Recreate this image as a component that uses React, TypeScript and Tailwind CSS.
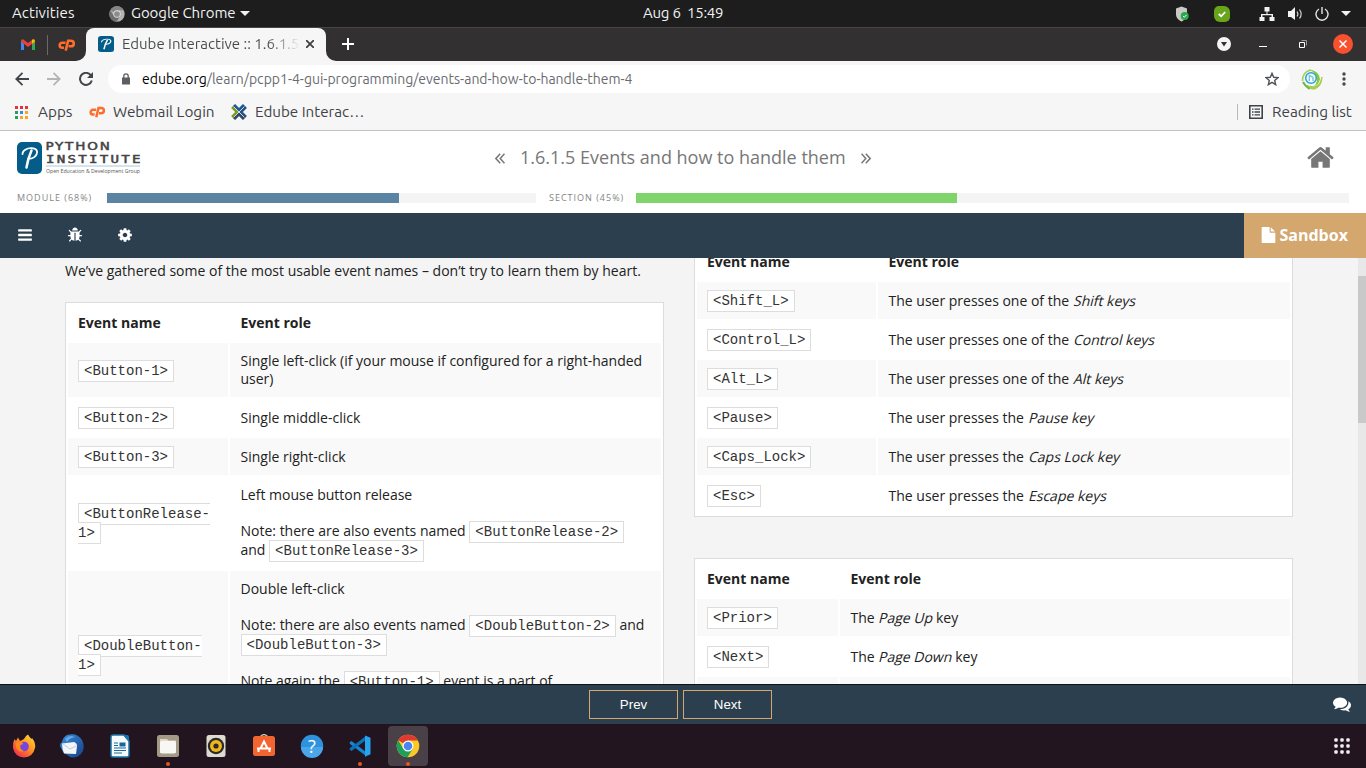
import React from "react";

type Kids = { children?: React.ReactNode };

const HOME =
  "M1472 992v480q0 26-19 45t-45 19h-384v-384h-256v384h-384q-26 0-45-19t-19-45v-480q0-1 .5-3t.5-3l575-474 575 474q1 2 1 6zm223-69l-62 74q-8 9-21 11h-3q-13 0-21-7l-692-577-692 577q-12 8-24 7-13-2-21-11l-62-74q-8-10-7-23.5t11-21.5l719-599q32-26 76-26t76 26l244 204v-195q0-14 9-23t23-9h192q14 0 23 9t9 23v408l219 182q10 8 11 21.5t-7 23.5z";
const COG =
  "M1152 896q0-106-75-181t-181-75-181 75-75 181 75 181 181 75 181-75 75-181zm512-109v222q0 12-8 23t-20 13l-185 28q-19 54-39 91 35 50 107 138 10 12 10 25t-9 23q-27 37-99 108t-94 71q-12 0-26-9l-138-108q-44 23-91 38-16 136-29 186-7 28-36 28h-222q-14 0-24.5-8.5t-11.5-21.5l-28-184q-49-16-90-37l-141 107q-10 9-25 9-14 0-25-11-126-114-165-168-7-10-7-23 0-12 8-23 15-21 51-66.5t54-70.5q-27-50-41-99l-183-27q-13-2-21-12.5t-8-23.5v-222q0-12 8-23t19-13l186-28q14-46 39-92-40-57-107-138-10-12-10-24 0-10 9-23 26-36 98.5-107.5t94.5-71.5q13 0 26 10l138 107q44-23 91-38 16-136 29-186 7-28 36-28h222q14 0 24.5 8.5t11.5 21.5l28 184q49 16 90 37l142-107q9-9 24-9 13 0 25 10 129 119 165 170 7 8 7 22 0 12-8 23-15 21-51 66.5t-54 70.5q26 50 41 98l183 28q13 2 21 12.5t8 23.5z";
const BARS =
  "M1664 1344v128q0 26-19 45t-45 19h-1408q-26 0-45-19t-19-45v-128q0-26 19-45t45-19h1408q26 0 45 19t19 45zm0-512v128q0 26-19 45t-45 19h-1408q-26 0-45-19t-19-45v-128q0-26 19-45t45-19h1408q26 0 45 19t19 45zm0-512v128q0 26-19 45t-45 19h-1408q-26 0-45-19t-19-45v-128q0-26 19-45t45-19h1408q26 0 45 19t19 45z";
const BUG =
  "M1696 960q0 26-19 45t-45 19h-224q0 171-67 290l208 209q19 19 19 45t-19 45q-18 19-45 19t-45-19l-198-197q-5 5-15 13t-42 28.5-65 36.5-82 29-97 13v-896h-128v896q-51 0-101.5-13.5t-87-33-66-39-43.5-32.5l-15-14-183 207q-20 21-48 21-24 0-43-16-19-18-20.5-44.5t15.5-46.5l202-227q-58-114-58-274h-224q-26 0-45-19t-19-45 19-45 45-19h224v-294l-173-173q-19-19-19-45t19-45 45-19 45 19l173 173h844l173-173q19-19 45-19t45 19 19 45-19 45l-173 173v294h224q26 0 45 19t19 45zm-480-576h-640q0-133 93.5-226.5t226.5-93.5 226.5 93.5 93.5 226.5z";
const COMMENTS =
  "M1408 768q0 139-94 257t-256.5 186.5-353.5 68.5q-86 0-176-16-124 88-278 128-36 9-86 16h-3q-11 0-20.5-8t-11.5-21q-1-3-1-6.5t.5-6.5 2-6l2.5-5 3.5-5.5 4-5 4.5-5 4-4.5q5-6 23-25t26-29.5 22.5-29 25-38.5 20.5-44q-124-72-195-177t-71-224q0-139 94-257t256.5-186.5 353.5-68.5 353.5 68.5 256.5 186.5 94 257zm384 256q0 120-71 224.5t-195 176.5q10 24 20.5 44t25 38.5 22.5 29 26 29.5 23 25q1 1 4 4.5t4.5 5 4 5 3.5 5.5l2.5 5 2 6 .5 6.5-1 6.5q-3 14-13 22t-22 7q-50-7-86-16-154-40-278-128-90 16-176 16-271 0-472-132 58 4 88 4 161 0 309-45t264-129q125-92 192-212t67-254q0-77-23-152 129 71 204 178t75 230z";
const FILE =
  "M1152 512v-472q22 14 36 28l408 408q14 14 28 36h-472zm-128 32q0 40 28 68t68 28h544v1056q0 40-28 68t-68 28h-1344q-40 0-68-28t-28-68v-1600q0-40 28-68t68-28h800v544z";

function Glyph({ d, className }: { d: string; className: string }) {
  return (
    <svg viewBox="0 0 1792 1792" fill="currentColor" className={className}>
      <path d={d} />
    </svg>
  );
}

function CPanel({ className }: { className: string }) {
  return (
    <svg viewBox="0 0 17 12" className={className} fill="none" stroke="#ff6c2c" strokeWidth="2.6">
      <path d="M7.600 3.700H4.200a2.500 2.500 0 0 0 0 5H6" />
      <path d="M7.700 11.600L10.100 1.700H13a2.800 2.800 0 0 1 0 5.600H10.600" />
    </svg>
  );
}

function PyMark({ className }: { className: string }) {
  return (
    <svg viewBox="0 0 25 32" preserveAspectRatio="none" className={className}>
      <rect width="25" height="32" rx="5" fill="#045c8a" />
      <path
        d="M5.500 12C5.500 8.500 10 6 14.500 6.200 20 6.400 21 9.500 19.500 12.500 18 15.500 14.500 17 11.500 16.500"
        fill="none"
        stroke="#fff"
        strokeWidth="1.800"
        strokeLinecap="round"
      />
      <path d="M14.500 8.500C12.500 13 10.500 19 9.500 25.500" fill="none" stroke="#fff" strokeWidth="2.500" strokeLinecap="round" />
    </svg>
  );
}

function ChromeLogo({ className }: { className: string }) {
  return (
    <svg viewBox="0 0 24 24" className={className}>
      <circle cx="12" cy="12" r="11.500" fill="#b4b4b4" />
      <path d="M12 12L2 6.200A11.500 11.500 0 0 1 22 6.500H12z" fill="#858585" />
      <path d="M2 6.200A11.500 11.500 0 0 0 11.500 23.500L17 14.500 12 12 7.200 14.800z" fill="#6f6f6f" />
      <circle cx="12" cy="12" r="5.500" fill="#e0e0e0" />
      <circle cx="12" cy="12" r="4.300" fill="#8c8c8c" />
    </svg>
  );
}

function TopBar() {
  return (
    <div className="flex h-[27px] items-center bg-[#1d1d1d] pl-3 text-[15px] text-[#f2f2f2]">
      <span className="w-[97px] tracking-[0.1px]">Activities</span>
      <ChromeLogo className="size-4" />
      <span className="ml-1.5 w-[109px] tracking-[-0.05px] whitespace-nowrap">Google Chrome</span>
      <svg viewBox="0 0 10 5" className="h-[5px] w-[10px]" fill="#f2f2f2">
        <path d="M0 0h10L5 5z" />
      </svg>
      <span className="ml-[393px] w-[81px] shrink-0 whitespace-pre tracking-[-0.25px]">Aug 6  15:49</span>
      <div className="flex flex-1 items-center pl-[451px]">
        <svg viewBox="0 0 14 16" className="h-4 w-[14px] shrink-0">
          <path d="M6.500 0.500L12 2.500V8C12 12 9.500 14 6.500 15.500 3.500 14 1 12 1 8V2.500z" fill="#c9c9c9" />
          <circle cx="9.700" cy="10" r="4" fill="#2ba84a" />
          <path d="M8 10l1.300 1.300 2.200-2.400" stroke="#fff" fill="none" />
        </svg>
        <svg viewBox="0 0 16 16" className="ml-[25px] size-4 shrink-0">
          <path d="M5 0h5a6 6 0 0 1 6 6v5a5 5 0 0 1-5 5H6a6 6 0 0 1-6-6V5a5 5 0 0 1 5-5z" fill="#69a51b" />
          <path d="M4.800 8l2.400 2.300 4-4.300" stroke="#fff" strokeWidth="1.800" fill="none" />
        </svg>
        <svg viewBox="0 0 16 14" className="ml-[28.5px] h-[14px] w-4 shrink-0" fill="#f2f2f2">
          <path d="M5.500 0h5v4.500H8.500V7H14v3h1.500v4h-5v-4h2V8.300H3.500V10h2v4h-5v-4H2V7h5.500V4.500h-2z" />
        </svg>
        <svg viewBox="0 0 16 14" className="ml-[13.5px] h-[14px] w-4 shrink-0" fill="#f2f2f2">
          <path d="M0 4h3l4-4v13L3 10H0z" />
          <path d="M9 4.500q1.800 2.500 0 5M11.500 2.500q3.300 4.500 0 9" fill="none" stroke="#d0d0d0" strokeWidth="1.200" />
        </svg>
        <svg viewBox="0 0 14 14" className="ml-[11px] size-[14px] shrink-0" fill="none" stroke="#e6e6e6" strokeWidth="1.400">
          <path d="M4 2A6 6 0 1 0 10 2M7 0v7" />
        </svg>
        <svg viewBox="0 0 10 5" className="ml-[12px] h-[5px] w-[10px] shrink-0" fill="#f2f2f2">
          <path d="M0 0h10L5 5z" />
        </svg>
      </div>
    </div>
  );
}

function TabStrip() {
  return (
    <div className="flex h-[34px] items-center border-t border-[#474445] bg-[#333031]">
      <svg viewBox="0 0 14 11" className="ml-[21px] h-[11px] w-[14px]">
        <path d="M0 1.500V11h3V5z" fill="#4285f4" />
        <path d="M14 1.500V11h-3V5z" fill="#34a853" />
        <path d="M0 2.500Q0 .2 2 .2L7 4 12 .2Q14 .2 14 2.500L7 8z" fill="#ea4335" />
        <path d="M11 1L12 .2Q14 .2 14 2.500L11 5z" fill="#fbbc04" />
      </svg>
      <div className="ml-3 h-5 w-px bg-[#6b696a]" />
      <CPanel className="ml-[10px] h-3 w-[17px]" />
      <svg viewBox="0 0 10 10" className="ml-[1px] size-[10px] self-end" fill="#f6f6f6">
        <path d="M10 0A10 10 0 0 1 0 10H10z" />
      </svg>
      <div className="flex h-full w-[240px] items-center rounded-t-lg bg-[#f6f6f6] pb-px pl-3 text-[15px] text-[#45484b]">
        <PyMark className="size-4 shrink-0" />
        <span className="ml-2 w-[178px] shrink-0 overflow-hidden bg-gradient-to-r from-[#45484b] from-82% to-transparent bg-clip-text whitespace-nowrap text-transparent">
          Edube Interactive :: 1.6.1.5
        </span>
        <svg viewBox="0 0 8 8" className="ml-[6px] size-2 shrink-0" stroke="#3d4043" strokeWidth="1.800">
          <path d="M0 0l8 8M8 0L0 8" />
        </svg>
      </div>
      <svg viewBox="0 0 10 10" className="size-[10px] self-end" fill="#f6f6f6">
        <path d="M0 0A10 10 0 0 0 10 10H0z" />
      </svg>
      <svg viewBox="0 0 12 12" className="-mt-px ml-[6px] size-3" stroke="#fff" strokeWidth="2">
        <path d="M6 0v12M0 6h12" />
      </svg>
      <div className="ml-auto flex items-center pr-[13px] pb-px">
        <svg viewBox="0 0 14 14" className="size-[14px]">
          <circle cx="7" cy="7" r="7" fill="#f6f6f6" />
          <path d="M4 5h6L7 9.500z" fill="#333031" />
        </svg>
        <div className="mt-1 ml-[28px] h-px w-2 bg-white" />
        <svg viewBox="0 0 8 8" className="ml-[32px] size-2" fill="none" stroke="#fff">
          <path d="M.5 2.500h5v5h-5z" />
          <path d="M2.500.5h5v5" stroke="#9a9899" />
        </svg>
        <svg viewBox="0 0 20 20" className="ml-[26px] size-5">
          <circle cx="10" cy="10" r="10" fill="#f9502d" />
          <path d="M6.500 6.500l7 7M13.500 6.500l-7 7" stroke="#fff" strokeWidth="1.500" />
        </svg>
      </div>
    </div>
  );
}

function Toolbar() {
  return (
    <div className="flex h-[36px] items-center bg-[#f6f6f6]">
      <svg viewBox="0 0 14 14" className="ml-[15px] size-[14px]" fill="none" stroke="#414549" strokeWidth="1.800">
        <path d="M14 7H1.500M7.500 .8L1.300 7l6.200 6.200" />
      </svg>
      <svg viewBox="0 0 14 14" className="ml-[18px] size-[14px]" fill="none" stroke="#b3b5b7" strokeWidth="1.800">
        <path d="M0 7h12.500M6.500 .8L12.700 7l-6.200 6.200" />
      </svg>
      <svg viewBox="0 0 14 14" className="ml-[18px] size-[14px]" fill="none" stroke="#414549" strokeWidth="2">
        <path d="M12 3.500A6 6 0 1 0 12.800 8.500" />
        <path d="M14 0v6H8z" fill="#414549" stroke="none" />
      </svg>
      <div className="ml-[15px] flex h-7 w-[1182px] items-center rounded-full bg-white pl-3.5 text-[14px] text-[#686c70]">
        <svg viewBox="0 0 8 12" className="h-3 w-2" fill="#5b5f63">
          <path d="M0 4.500h8V11.500H0z" />
          <path d="M1.800 5V3a2.200 2.200 0 0 1 4.400 0v2" fill="none" stroke="#5b5f63" strokeWidth="1.300" />
        </svg>
        <span className="ml-3 whitespace-nowrap">
          <span className="text-black">edube.org</span>/learn/pcpp1-4-gui-programming/events-and-how-to-handle-them-4
        </span>
        <svg viewBox="0 0 14 14" className="mr-[11px] ml-auto size-[14px]" fill="none" stroke="#515559" strokeWidth="1.400">
          <path d="M7 1.300L8.700 5.300 13 5.600 9.700 8.400 10.700 12.700 7 10.400 3.300 12.700 4.300 8.400 1 5.600 5.300 5.300z" />
        </svg>
      </div>
      <svg viewBox="0 0 22 22" className="ml-[11px] size-[22px]" fill="none">
        <path d="M1.500 13Q1 4 10 2" stroke="#a5cf55" strokeWidth="1.500" />
        <path d="M7 1.500Q18 2 19 11 18 16 14 18 17 12 15.500 8 13 3 7 1.500z" fill="#8cc63f" />
        <path d="M21 9Q19 22 5 17.500 9 22 14 21 21 18 21 9z" fill="#a5cf55" stroke="#a5cf55" />
        <path d="M2 14Q4 18 8.500 21" stroke="#6fb544" strokeWidth="2" />
        <circle cx="10" cy="10" r="5.300" fill="#fff" stroke="#22a6c9" strokeWidth="1.500" />
        <path d="M8.300 13V7.500l3.700 2v3.500" stroke="#72c5db" strokeWidth="1.400" />
      </svg>
      <svg viewBox="0 0 4 14" className="ml-[19px] h-[14px] w-1" fill="#45494d">
        <circle cx="2" cy="2" r="1.700" />
        <circle cx="2" cy="7" r="1.700" />
        <circle cx="2" cy="12" r="1.700" />
      </svg>
    </div>
  );
}

const APP_COLORS = ["#ee2f3b", "#ee2f3b", "#ee2f3b", "#22a05a", "#2a8cf0", "#f5a623", "#22a05a", "#f5a623", "#f5a623"];

function Bookmarks() {
  return (
    <div className="flex h-[34px] items-center border-b border-[#c2c2c2] bg-[#f6f6f6] pb-[3px] text-[15.3px] text-[#3f4347]">
      <svg viewBox="0 0 13 13" className="ml-[15px] size-[13px]">
        {APP_COLORS.map((c, i) => (
          <rect key={i} x={(i % 3) * 5} y={Math.floor(i / 3) * 5} width="3" height="3" fill={c} />
        ))}
      </svg>
      <span className="ml-2.5 w-[51px]">Apps</span>
      <CPanel className="h-3 w-4" />
      <span className="ml-2 w-[118px] whitespace-nowrap">Webmail Login</span>
      <svg viewBox="0 0 16 16" className="size-4" fill="none" strokeWidth="3">
        <path d="M3 1l5 5 5-5" stroke="#1e5a96" />
        <path d="M3 15l5-5 5 5" stroke="#2f4a66" />
        <path d="M1 3l5 5-5 5" stroke="#7d9a25" strokeWidth="2.500" />
        <path d="M15 3l-5 5 5 5" stroke="#28517c" strokeWidth="2.500" />
        <path d="M3 3l10 10M13 3L3 13" stroke="#e9eef2" strokeWidth=".8" />
      </svg>
      <span className="ml-2 text-[15.2px] whitespace-nowrap">Edube Interac…</span>
      <div className="mr-[11px] ml-auto h-4 w-px bg-[#b9babb]" />
      <svg viewBox="0 0 14 14" className="size-[14px]" fill="none" stroke="#3f4347" strokeWidth="1.600">
        <path d="M.8.8h12.400v12.400H.8z" />
        <path d="M3 4.200h1.500M5.500 4.200H11M3 7h1.500M5.500 7H11M3 9.800h1.500M5.500 9.800H11" strokeWidth="1.300" />
      </svg>
      <span className="ml-[9px] w-[94px] whitespace-nowrap">Reading list</span>
    </div>
  );
}

function CourseHeader() {
  return (
    <header className="flex h-[82px] flex-col bg-white">
      <div className="flex h-[54px] items-center">
        <div className="ml-[17px] flex w-[124px] items-start gap-1">
          <PyMark className="h-8 w-[25px]" />
          <svg viewBox="0 0 95 33" className="h-[33px] w-[95px] overflow-visible">
            <g fill="#444" stroke="#444" strokeWidth=".5">
              <text transform="scale(1.25 1)" x="-0.500" y="8.200" fontSize="10.800" fontFamily="DejaVu Sans" textLength="51.500">
                PYTHON
              </text>
              <text transform="scale(1.25 1)" x="0" y="20.600" fontSize="11.300" fontFamily="DejaVu Sans Mono" textLength="75.600">
                INSTITUTE
              </text>
            </g>
            <path d="M0 24h94" stroke="#a9c7dc" />
            <text x="0" y="31" fontSize="5.800" fontFamily="Open Sans" fill="#555" textLength="94" lengthAdjust="spacingAndGlyphs">
              Open Education &amp; Development Group
            </text>
          </svg>
        </div>
        <div className="flex flex-1 items-center pb-[1px] pl-[354px] text-[18px] text-[#777]">
          <svg viewBox="0 0 10 11" className="mt-px mr-[15px] h-[11px] w-[10px]" fill="none" stroke="#777" strokeWidth="1.500">
            <path d="M5.200 .8L.9 5.500l4.300 4.700M9.500 .8L5.200 5.500l4.300 4.700" />
          </svg>
          <span className="w-[341px] whitespace-nowrap">1.6.1.5 Events and how to handle them</span>
          <svg viewBox="0 0 10 11" className="mt-px h-[11px] w-[10px]" fill="none" stroke="#777" strokeWidth="1.500">
            <path d="M.5 .8l4.300 4.700-4.300 4.700M4.800 .8l4.300 4.700-4.300 4.700" />
          </svg>
        </div>
        <Glyph d={HOME} className="mr-[31px] mb-[2px] size-[29px] text-[#777]" />
      </div>
      <div className="flex items-center pt-[8px] font-['Open_Sans'] text-[9px] leading-[10px] tracking-[1px] whitespace-nowrap text-[#858585]">
        <span className="ml-[17px] w-[90px]">MODULE (68%)</span>
        <div className="h-[10px] w-[429px] bg-[#f4f4f4]">
          <div className="h-full w-[292px] bg-[#5a84a2]" />
        </div>
        <span className="ml-[13px] w-[87px]">SECTION (45%)</span>
        <div className="h-[10px] w-[713px] bg-[#f4f4f4]">
          <div className="h-full w-[321px] bg-[#7fd56b]" />
        </div>
      </div>
    </header>
  );
}

function NavBar() {
  return (
    <nav className="flex h-[45px] shrink-0 items-center bg-[#2b3f4e] text-white">
      <Glyph d={BARS} className="mb-px ml-[17px] size-4" />
      <Glyph d={BUG} className="mb-px ml-[34px] size-4" />
      <Glyph d={COG} className="mb-px ml-[34px] size-4" />
      <div className="ml-auto flex h-full w-[122px] items-center bg-[#d3a76e] pb-[2px] pl-[17px] text-[16px] font-bold">
        <svg viewBox="128 0 1536 1792" fill="currentColor" className="h-4 w-[15px]">
          <path d={FILE} />
        </svg>
        <span className="ml-[3.5px]">Sandbox</span>
      </div>
    </nav>
  );
}

function Code({ children }: Kids) {
  return (
    <code className="border border-[#ddd] bg-white px-[5px] py-[2px] font-['Liberation_Mono',monospace] text-[14px] text-[#333]">
      {children}
    </code>
  );
}

function Slanted({ children }: Kids) {
  return <span className="inline-block origin-[0_77%] -skew-x-[14deg]">{children}</span>;
}

function Line({ children }: Kids) {
  return <div className="h-[18px] whitespace-nowrap">{children}</div>;
}

function CodeLine({ children }: Kids) {
  return <div className="h-[19px] whitespace-nowrap leading-[19px]">{children}</div>;
}

function EventTable({ first, children }: Kids & { first: string }) {
  return (
    <table className="w-full table-fixed border-separate border-spacing-[2px] border border-[#dcdcdc] bg-white leading-[18px]">
      <colgroup>
        <col className={first} />
        <col />
      </colgroup>
      <thead>
        <tr className="h-[36px] text-left">
          <th className="px-2.5 py-0 font-bold">Event name</th>
          <th className="py-0 pr-2 pl-[10.5px] font-bold">Event role</th>
        </tr>
      </thead>
      <tbody className="[&>tr:nth-child(odd)>td]:bg-[#f9f9f9]">{children}</tbody>
    </table>
  );
}

function Row({ h, name, tall, children }: Kids & { h?: string; name: React.ReactNode; tall?: boolean }) {
  return (
    <tr className={h ?? "h-[37px]"}>
      <td className="px-2.5 py-0 align-middle whitespace-nowrap">{name}</td>
      <td className={tall ? "pt-[9px] pr-2 pb-0 pl-[10.5px] align-top" : "py-0 pr-2 pl-[10.5px] align-middle"}>{children}</td>
    </tr>
  );
}

function Broken({ a, b }: { a: string; b: string }) {
  return (
    <div className="leading-[17px]">
      <Code>
        {a}
        <br />
        {b}
      </Code>
    </div>
  );
}

function Lesson() {
  const keys: [string, string, string][] = [
    ["<Shift_L>", "one of the ", "Shift keys"],
    ["<Control_L>", "one of the ", "Control keys"],
    ["<Alt_L>", "one of the ", "Alt keys"],
    ["<Pause>", "the ", "Pause key"],
    ["<Caps_Lock>", "the ", "Caps Lock key"],
    ["<Esc>", "the ", "Escape keys"],
  ];
  return (
    <main className="flex h-[426px] overflow-hidden bg-[#f4f4f4] pl-[65px] text-[14px] leading-[18px] text-[#222]">
      <div className="w-[599px] shrink-0 pt-1">
        <p className="mb-[22px] tracking-[0.01px] whitespace-nowrap">
          We’ve gathered some of the most usable event names – don’t try to learn them by heart.
        </p>
        <EventTable first="w-[160px]">
          <Row h="h-[54px]" name={<Code>{"<Button-1>"}</Code>}>
            <Line>Single left-click (if your mouse if configured for a right-handed</Line>
            <Line>user)</Line>
          </Row>
          <Row name={<Code>{"<Button-2>"}</Code>}>Single middle-click</Row>
          <Row name={<Code>{"<Button-3>"}</Code>}>Single right-click</Row>
          <Row tall h="h-[92px]" name={<Broken a="<ButtonRelease-" b="1>" />}>
            <Line>Left mouse button release</Line>
            <Line />
            <Line>
              Note: there are also events named <Code>{"<ButtonRelease-2>"}</Code>
            </Line>
            <CodeLine>
              and <Code>{"<ButtonRelease-3>"}</Code>
            </CodeLine>
          </Row>
          <Row tall h="h-[167px]" name={<Broken a="<DoubleButton-" b="1>" />}>
            <Line>Double left-click</Line>
            <Line />
            <Line>
              Note: there are also events named <Code>{"<DoubleButton-2>"}</Code> and
            </Line>
            <CodeLine>
              <Code>{"<DoubleButton-3>"}</Code>
            </CodeLine>
            <CodeLine />
            <Line>
              Note again: the <Code>{"<Button-1>"}</Code> event is a part of
            </Line>
          </Row>
        </EventTable>
      </div>
      <div className="-mt-[17px] ml-[30px] w-[599px] shrink-0">
        <EventTable first="w-[179px]">
          {keys.map(([code, mid, key]) => (
            <Row key={code} name={<Code>{code}</Code>}>
              The user presses {mid}
              <Slanted>{key}</Slanted>
            </Row>
          ))}
        </EventTable>
        <div className="h-[41px]" />
        <EventTable first="w-[141px]">
          <Row name={<Code>{"<Prior>"}</Code>}>
            The <Slanted>Page Up</Slanted> key
          </Row>
          <Row name={<Code>{"<Next>"}</Code>}>
            The <Slanted>Page Down</Slanted> key
          </Row>
          <Row name="" />
        </EventTable>
      </div>
      <div className="ml-auto h-full w-2 bg-[#e8e8e8] pt-[18px]">
        <div className="h-[147px] bg-[#c9c9c9]" />
      </div>
    </main>
  );
}

function Footer() {
  return (
    <footer className="flex h-10 items-center border-t border-[#111] bg-[#2b3f4e] text-white">
      <div className="ml-[589px] flex gap-[5px] font-['Liberation_Sans',sans-serif] text-[13.3px]">
        <button className="h-[29px] w-[89px] border border-[#d3a76e]">Prev</button>
        <button className="h-[29px] w-[89px] border border-[#d3a76e]">Next</button>
      </div>
      <Glyph d={COMMENTS} className="mr-[15px] mb-[2px] ml-auto size-[18px]" />
    </footer>
  );
}

function DockItem({ active, dot, children }: Kids & { active?: boolean; dot?: boolean }) {
  return (
    <div
      className={
        active
          ? "relative flex size-10 items-center justify-center rounded-[4px] bg-[#4a4047]"
          : "relative flex size-10 items-center justify-center"
      }
    >
      <svg viewBox="0 0 24 24" className="size-6">
        {children}
      </svg>
      {dot && <span className="absolute bottom-0 left-[18px] size-1 rounded-full bg-[#e95420]" />}
    </div>
  );
}

function Dock() {
  return (
    <div className="flex h-[44px] items-center gap-2 bg-[#22151f] pl-1">
      <DockItem>
        <defs>
          <linearGradient id="fx" x1="1" y1="0" x2="0.200" y2="1">
            <stop offset="0" stopColor="#ffe14a" />
            <stop offset=".45" stopColor="#ff9a1f" />
            <stop offset="1" stopColor="#f5274e" />
          </linearGradient>
          <linearGradient id="tb" x1="0" y1="0" x2="1" y2="1">
            <stop offset="0" stopColor="#3a8fdc" />
            <stop offset="1" stopColor="#173f86" />
          </linearGradient>
        </defs>
        <path d="M2.500 5L4 7 6 3.500 8 7Q12 6 14 2L16 .5Q18 4 19.500 5L20 4Q24 9 23 14 21 23 12 23.500 3 23 1 14 .5 9 2.500 5z" fill="url(#fx)" />
        <circle cx="12" cy="12.500" r="4.800" fill="#7645d9" />
        <path d="M4 9Q9 6 11.500 10L8.500 11Q7 15 12 17 6 19 4 13z" fill="#ff8a1e" />
      </DockItem>
      <DockItem>
        <path d="M7 1Q17-2 22 6 26 14 21 20 16 25 10 23L3 18 0 12Q0 9 2 8 3 3 7 1z" fill="url(#tb)" />
        <path d="M2 9.500L14 8Q17 9 17 12L16 20 4 19.500Q2 15 2 9.500z" fill="#f3f5f8" />
        <path d="M3 10l7 5 6-3" fill="none" stroke="#c2ccd8" />
        <path d="M5 5Q9 0 15 3 9 4 7 8z" fill="#63abea" />
      </DockItem>
      <DockItem>
        <path d="M5 1h11l5 6v14a2 2 0 0 1-2 2H5a2 2 0 0 1-2-2V3a2 2 0 0 1 2-2z" fill="#f7fafc" stroke="#1b76a8" strokeWidth="1.500" />
        <path d="M15 1h4q2 0 2 2v5z" fill="#1976ae" />
        <path d="M6 9h4M6 11.500h4M6 14h12M6 16.500h12M6 19h8" stroke="#1a6c9d" strokeWidth="1.200" />
        <path d="M11.500 8.500h6v4h-6z" fill="#17679a" />
      </DockItem>
      <DockItem dot>
        <rect x="1" y="1" width="22" height="22" rx="2.500" fill="#a39b86" />
        <path d="M4 5h7l1.500 1.500H20V19H4z" fill="#e2d8c4" />
        <rect x="4" y="7" width="16" height="12.500" rx="2" fill="#f9f7f3" />
      </DockItem>
      <DockItem>
        <rect x="2.500" y="1" width="19" height="22" rx="2.500" fill="#dedbd0" />
        <circle cx="12" cy="12" r="8.200" fill="#2a2a2a" />
        <circle cx="12" cy="12" r="6" fill="#f2b51d" />
        <circle cx="12" cy="12" r="2.600" fill="#2a2a2a" />
      </DockItem>
      <DockItem>
        <path d="M8 3q4-5 8 0" fill="none" stroke="#d8c3ab" strokeWidth="1.300" />
        <rect x="1" y="2" width="22" height="20" rx="2.500" fill="#f26430" />
        <path d="M8.500 14.500L12 7.500 15.500 14.500M5 14.500h14M6.500 15v3M17.500 15v3" fill="none" stroke="#fff" strokeWidth="2" />
      </DockItem>
      <DockItem>
        <circle cx="12" cy="12" r="11.200" fill="#2e92dc" />
        <path d="M1 13h22a11 11 0 0 1-22 0z" fill="#4aa6e8" />
        <text x="12" y="18.500" fontSize="18" textAnchor="middle" fill="#fff" fontFamily="Open Sans">?</text>
      </DockItem>
      <DockItem dot>
        <path d="M1.500 8.500L3.500 7 18 18v4L2 10z" fill="#1786cf" />
        <path d="M1.500 15.500L3.500 17 18 6V2L2 14z" fill="#0e70b8" />
        <path d="M17 1.500l5.500 2.200V20.300L17 22.800z" fill="#27a4ee" />
      </DockItem>
      <DockItem active dot>
        <circle cx="12" cy="12" r="11.300" fill="#fbc926" />
        <path d="M12 12L2.300 6.200A11.300 11.300 0 0 1 21.900 6.500H12z" fill="#e0392d" />
        <path d="M2.300 6.200A11.300 11.300 0 0 0 11.500 23.300L17 14.500 12 12 7.200 14.800z" fill="#1da05a" />
        <circle cx="12" cy="12" r="5.500" fill="#fff" />
        <circle cx="12" cy="12" r="4.300" fill="#4a86ee" />
      </DockItem>
      <svg viewBox="0 0 16 16" className="mr-4 ml-auto size-4" fill="#f0eef0">
        {[0, 1, 2, 3, 4, 5, 6, 7, 8].map((i) => (
          <rect key={i} x={0.3 + (i % 3) * 6} y={0.3 + Math.floor(i / 3) * 6} width="3.400" height="3.400" rx="1" />
        ))}
      </svg>
    </div>
  );
}

export default function App() {
  return (
    <div className="flex h-[768px] w-[1366px] flex-col overflow-hidden font-['Open_Sans','Noto_Sans',sans-serif]">
      <div className="flex flex-col font-['Ubuntu','Noto_Sans','Open_Sans',sans-serif]">
        <TopBar />
        <TabStrip />
        <Toolbar />
        <Bookmarks />
      </div>
      <CourseHeader />
      <NavBar />
      <Lesson />
      <Footer />
      <Dock />
    </div>
  );
}
